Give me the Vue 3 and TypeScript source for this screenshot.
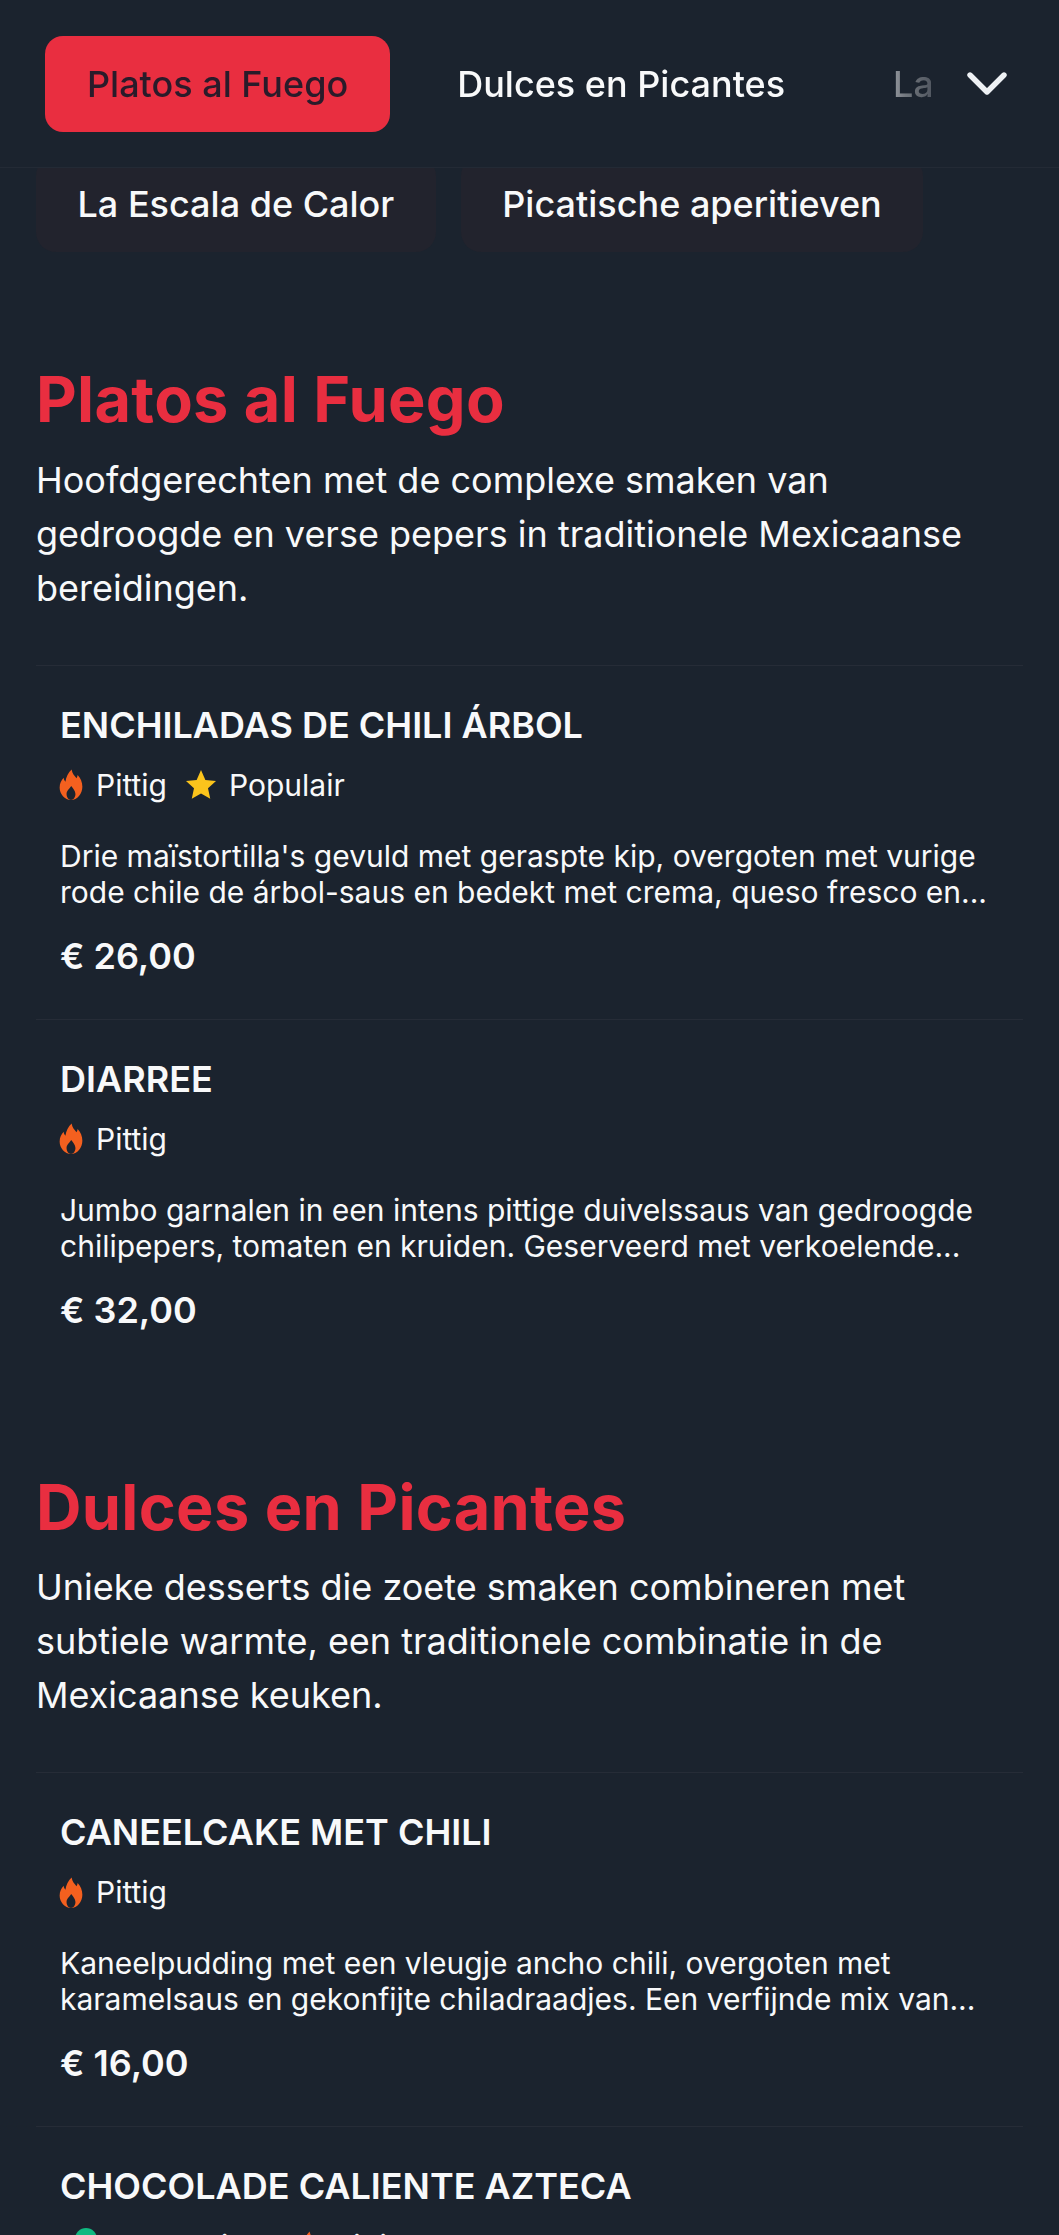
<script setup lang="ts">
type TagKind = 'fire' | 'star' | 'veg'
interface Tag { kind: TagKind; label: string }
interface Dish { name: string; tags: Tag[]; text?: string; price?: string }
interface Section { title: string; intro: string; dishes: Dish[] }

const fire: Tag = { kind: 'fire', label: 'Pittig' }
const star: Tag = { kind: 'star', label: 'Populair' }
const veg: Tag = { kind: 'veg', label: 'Vegetarisch' }

const tabs = ['Platos al Fuego', 'Dulces en Picantes', 'La Escala de Calor']
const chips = ['La Escala de Calor', 'Picatische aperitieven']

const sections: Section[] = [
  {
    title: 'Platos al Fuego',
    intro: 'Hoofdgerechten met de complexe smaken van gedroogde en verse pepers in traditionele Mexicaanse bereidingen.',
    dishes: [
      {
        name: 'ENCHILADAS DE CHILI ÁRBOL',
        tags: [fire, star],
        text: "Drie maïstortilla's gevuld met geraspte kip, overgoten met vurige rode chile de árbol-saus en bedekt met crema, queso fresco en...",
        price: '€ 26,00',
      },
      {
        name: 'DIARREE',
        tags: [fire],
        text: 'Jumbo garnalen in een intens pittige duivelssaus van gedroogde chilipepers, tomaten en kruiden. Geserveerd met verkoelende...',
        price: '€ 32,00',
      },
    ],
  },
  {
    title: 'Dulces en Picantes',
    intro: 'Unieke desserts die zoete smaken combineren met subtiele warmte, een traditionele combinatie in de Mexicaanse keuken.',
    dishes: [
      {
        name: 'CANEELCAKE MET CHILI',
        tags: [fire],
        text: 'Kaneelpudding met een vleugje ancho chili, overgoten met karamelsaus en gekonfijte chiladraadjes. Een verfijnde mix van...',
        price: '€ 16,00',
      },
      {
        name: 'CHOCOLADE CALIENTE AZTECA',
        tags: [veg, fire],
      },
    ],
  },
]
</script>

<template>
  <div class="page">
    <nav class="nav">
      <div class="nav-scroll">
        <button v-for="(t, i) in tabs" :key="t" class="tab" :class="{ active: i === 0 }">{{ t }}</button>
      </div>
      <svg class="chevron" viewBox="0 0 40 23" fill="none" stroke="#eef1f4" stroke-width="5.4" stroke-linecap="round" stroke-linejoin="round">
        <path d="M3 3 L20 20 L37 3" />
      </svg>
    </nav>

    <main class="content">
      <div class="chips">
        <button v-for="c in chips" :key="c" class="chip">{{ c }}</button>
      </div>

      <section v-for="s in sections" :key="s.title" class="section">
        <h2 class="section-title">{{ s.title }}</h2>
        <p class="section-intro">{{ s.intro }}</p>
        <article v-for="d in s.dishes" :key="d.name" class="dish">
          <h3 class="dish-name">{{ d.name }}</h3>
          <ul class="tags">
            <li v-for="t in d.tags" :key="t.label" class="tag">
              <svg v-if="t.kind === 'fire'" class="icon-fire" viewBox="1 0 22 30">
                <path fill="#f4601f" d="M12.600 0.500c.6 4 2.700 6 4.700 8.400.6-1 1-2 1.100-3.200 2.900 3 4.600 7 4.600 11.500C23 24 18 30 12 30S1 24 1 17.800c0-3.800 1.700-7 3.900-9.300.2 1.600.7 2.800 1.700 3.800C7.300 8 9.300 3.500 12.600.500z" />
                <path fill="#1b232e" d="M12.200 16.500c1.700 2.300 4.100 4.600 4.100 7.700 0 3-1.900 5.800-4.300 5.800s-4.300-2.800-4.300-5.800c0-3.100 2.800-5 4.500-7.700z" />
              </svg>
              <svg v-else-if="t.kind === 'star'" class="icon-star" viewBox="0 0 24 24">
                <path fill="#fbc41c" d="M12 0.400l3.500 7.900 8.500.9-6.400 5.700 1.800 8.500L12 19.200l-7.400 4.200 1.800-8.500L0 9.200l8.500-.9z" />
              </svg>
              <span v-else class="veg-dot"></span>
              <span>{{ t.label }}</span>
            </li>
          </ul>
          <p v-if="d.text" class="dish-desc">{{ d.text }}</p>
          <div v-if="d.price" class="dish-price">{{ d.price }}</div>
        </article>
      </section>
    </main>
  </div>
</template>

<style>
html, body { margin: 0; background: #1b232e; overflow: hidden; }
</style>

<style scoped>
.page {
  position: relative;
  width: 1059px;
  height: 2235px;
  overflow: hidden;
  background: #1b232e;
  color: #f8f9fa;
  font-family: Inter, "Liberation Sans", sans-serif;
}
.nav {
  position: absolute;
  inset: 0 0 auto 0;
  height: 168px;
  z-index: 2;
  background: #1b232e;
  border-bottom: 1px solid #232a35;
  box-sizing: border-box;
}
.nav-scroll {
  display: flex;
  gap: 26px;
  width: 886px;
  margin-left: 45px;
  padding-top: 36px;
  overflow: hidden;
  -webkit-mask-image: linear-gradient(to right, #000 810px, rgba(0,0,0,0.4) 860px, rgba(0,0,0,0.25) 886px);
  mask-image: linear-gradient(to right, #000 810px, rgba(0,0,0,0.4) 860px, rgba(0,0,0,0.25) 886px);
}
.tab {
  flex: none;
  height: 96px;
  padding: 0 41px;
  border: 0;
  border-radius: 18px;
  background: transparent;
  color: #f8f9fa;
  font: 500 36px Inter, sans-serif;
}
.tab.active { background: #e92e40; color: #2a1b2a; padding: 0 42px; }
.chevron {
  position: absolute;
  left: 967px;
  top: 72px;
  width: 40px;
  height: 23px;
}
.content { padding: 156px 36px 0; }
.chips { display: flex; gap: 25px; height: 96px; }
.chip {
  height: 96px;
  padding: 0 41.500px;
  border: 0;
  border-radius: 20px;
  background: #22232d;
  color: #f8f9fa;
  font: 500 36px Inter, sans-serif;
}
.section { margin-top: 109px; }
.section + .section { margin-top: 96px; }
.section-title {
  margin: 2px 0 0;
  font: 700 63px/76px Inter, sans-serif;
  letter-spacing: 0.300px;
  color: #e92e40;
}
.section-intro {
  margin: 15.500px 0 0;
  font-size: 36px;
  line-height: 54px;
  color: #f8f9fa;
}
.section-intro + .dish { margin-top: 50px; }
.dish {
  padding: 37px 24px 41px;
  border-top: 1px solid #262c37;
}
.dish-name { margin: 0; font: 600 36px/44px Inter, sans-serif; color: #f8f9fa; }
.tags {
  list-style: none;
  display: flex;
  align-items: center;
  gap: 19px;
  margin: 20px 0 0;
  padding: 0;
  font-size: 30px;
  line-height: 36px;
}
.tag { display: flex; align-items: center; gap: 13px; }
.icon-fire { width: 24px; height: 31px; margin-left: -1px; }
.icon-star { width: 30px; height: 31px; }
.dish-desc {
  margin: 35px 0 0;
  font-size: 30px;
  line-height: 36px;
  color: #f8f9fa;
}
.dish-price { margin-top: 24px; font: 600 36px/44px Inter, sans-serif; color: #f8f9fa; }
.veg-dot {
  align-self: flex-start;
  width: 22px;
  height: 22px;
  margin-left: 15px;
  border-radius: 50%;
  background: #10b981;
}
</style>
